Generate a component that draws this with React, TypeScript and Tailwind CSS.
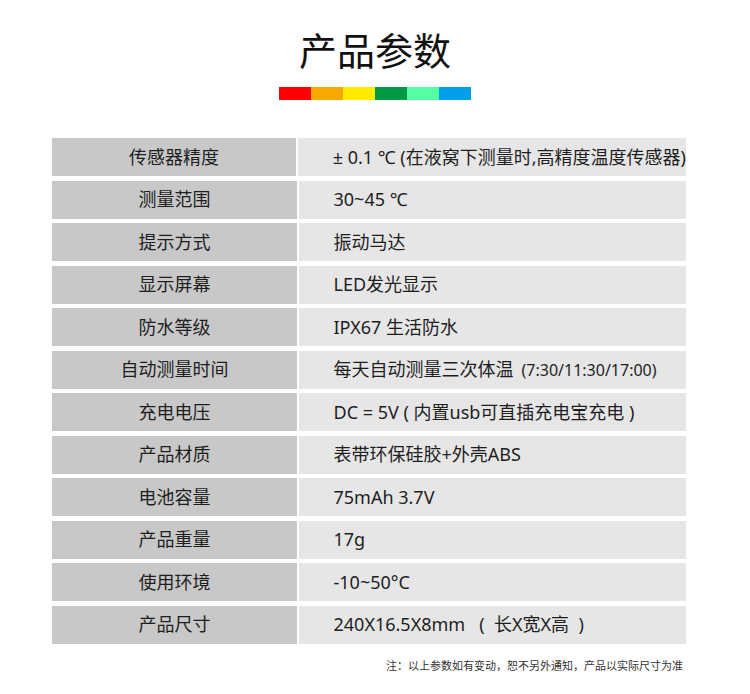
import React from 'react';

const specs: [string, React.ReactNode][] = [
  ['传感器精度', '± 0.1 ℃ (在液窝下测量时,高精度温度传感器)'],
  ['测量范围', '30~45 ℃'],
  ['提示方式', '振动马达'],
  ['显示屏幕', 'LED发光显示'],
  ['防水等级', 'IPX67 生活防水'],
  [
    '自动测量时间',
    <>
      每天自动测量三次体温<span className="ml-[8px] text-[16px]">(7:30/11:30/17:00)</span>
    </>,
  ],
  ['充电电压', 'DC = 5V ( 内置usb可直插充电宝充电 )'],
  ['产品材质', '表带环保硅胶+外壳ABS'],
  ['电池容量', '75mAh 3.7V'],
  ['产品重量', '17g'],
  ['使用环境', '-10~50°C'],
  ['产品尺寸', '240X16.5X8mm   (  长X宽X高  )'],
];

const bar = ['bg-[#ff0000]', 'bg-[#f8a900]', 'bg-[#ffea00]', 'bg-[#009a45]', 'bg-[#55ffa1]', 'bg-[#00a0e9]'];

export default function App() {
  return (
    <div
      className="w-[750px] h-[694px] bg-white text-[#1e1e1e] flex flex-col"
      style={{ fontFamily: '"Noto Sans", "Noto Sans CJK SC", sans-serif' }}
    >
      <h1 className="self-center pt-[31px] text-[38px] leading-none text-[#111] font-normal">产品参数</h1>

      <div className="self-center mt-[18px] flex h-[13px]">
        {bar.map((c) => (
          <div key={c} className={`${c} w-[32px]`} />
        ))}
      </div>

      <div className="mt-[38px] ml-[52px] w-[634px] flex flex-col gap-[4.5px]">
        {specs.map(([label, value]) => (
          <div key={label} className="flex h-[38px] gap-[1.5px]">
            <div className="w-[245px] bg-[#c8c8c8] flex items-center justify-center text-[18px]">
              {label}
            </div>
            <div className="flex-1 bg-[#e6e6e7] flex items-center pl-[35px] text-[18px] whitespace-pre">
              {value}
            </div>
          </div>
        ))}
      </div>

      <p className="mt-[16px] ml-[52px] w-[634px] text-right pr-[3px] text-[11px] leading-none text-[#333]">
        注：以上参数如有变动，恕不另外通知，产品以实际尺寸为准
      </p>
    </div>
  );
}
